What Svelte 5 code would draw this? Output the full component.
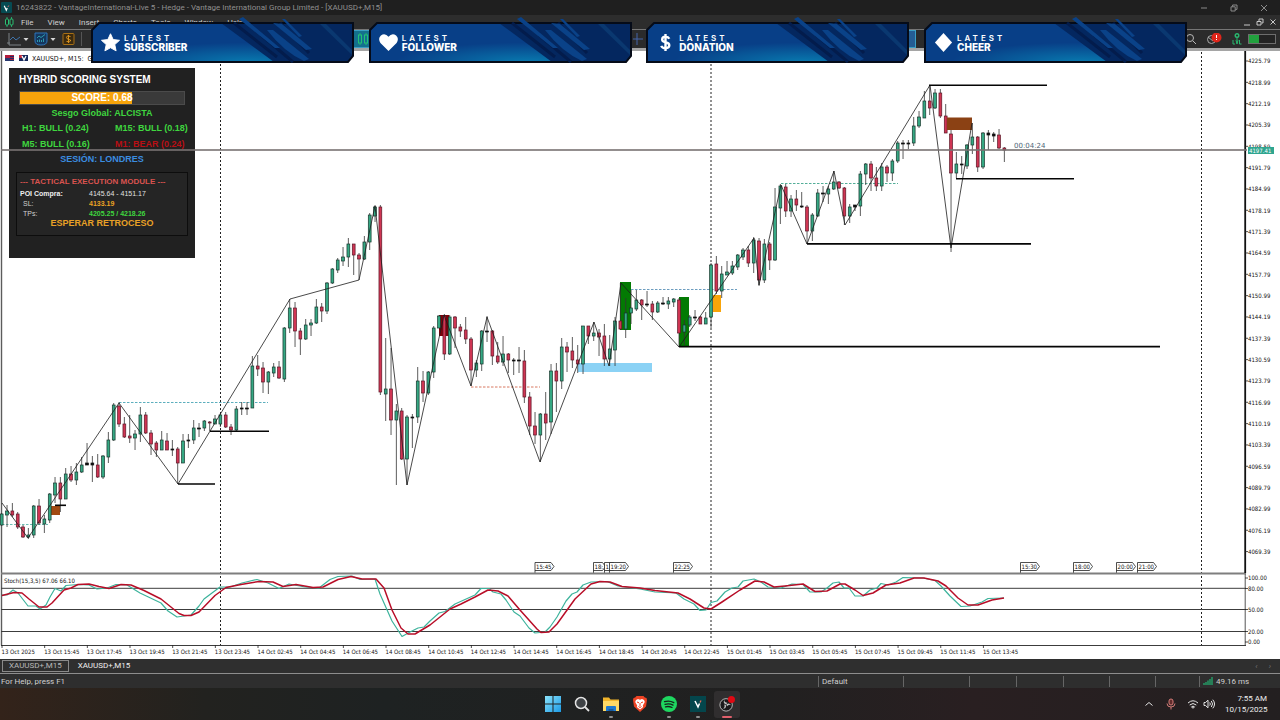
<script>
    // one candle per entry: high, body top, body bottom, low, direction (g, r or n for a doji)
    const raw = `513 514 525 526 g|505 511 515 527 g|503 511 515 517 r|512 514 527 529 r|525 527 537 538 r|528 535 537 539 g|505 506 535 538 g|499 506 523 525 r|515 519 524 533 g|493 494 520 523 g
477 483 495 503 g|477 483 499 512 r|468 474 499 499 g|466 474 480 482 r|463 472 480 485 g|457 465 472 473 g|443 463 465 465 n|456 463 465 482 n|454 465 477 478 r|455 456 477 479 g
432 440 457 463 g|403 405 440 441 g|402 406 424 427 r|417 424 437 438 r|415 436 438 443 r|430 434 438 450 g|407 415 434 442 g|412 415 433 434 r|430 433 444 455 r|441 443 450 457 r
431 440 450 450 g|433 441 450 450 r|440 449 450 456 n|447 449 463 484 r|434 441 463 463 g|434 440 441 448 n|420 428 440 444 g|423 428 429 437 n|420 421 428 431 g|421 422 423 431 r
415 419 424 424 g|413 415 424 427 g|412 415 427 428 r|424 427 430 435 r|406 409 430 431 g|402 408 409 415 n|402 408 409 415 n|356 366 408 408 g|355 366 369 376 r|362 368 382 393 r
371 372 382 394 g|363 367 373 377 g|361 367 378 379 r|327 328 379 382 g|299 308 328 333 g|302 308 331 347 r|328 331 339 355 r|319 325 339 340 g|319 323 325 336 g|299 307 323 324 g
303 307 311 322 r|282 283 311 314 g|268 269 283 284 g|258 260 270 273 g|247 257 261 266 g|238 244 257 267 g|244 244 255 275 r|253 255 259 280 r|236 242 259 260 g|213 215 242 250 g
205 207 216 222 g|205 207 392 395 r|338 389 394 421 g|348 389 420 435 r|404 411 420 485 g|408 411 459 460 r|415 417 459 485 g|414 417 418 448 n|367 381 417 423 g|371 381 393 402 r
371 372 393 395 g|326 328 372 378 g|315 316 328 328 g|314 316 354 360 r|315 317 354 355 g|316 317 328 348 r|324 327 331 337 r|317 330 339 344 r|337 339 370 386 r|360 363 370 377 g
330 331 364 371 g|316 331 332 342 n|330 331 356 365 r|342 356 362 364 r|336 354 362 366 g|353 354 360 373 r|358 360 361 375 n|347 360 361 373 n|350 361 397 403 r|392 397 426 435 r
412 426 435 444 r|413 414 435 462 g|392 414 423 440 r|364 371 422 434 g|363 371 381 412 r|338 347 381 389 g|342 347 352 372 r|337 351 360 368 r|345 360 364 373 r|326 326 364 374 g
326 326 336 344 r|322 333 336 341 g|329 333 337 356 r|324 336 359 366 r|335 349 359 366 g|317 321 350 366 g|283 321 329 330 r|298 313 329 338 g|290 308 313 324 g|290 300 309 311 g
299 300 305 320 r|291 304 305 307 n|301 304 312 320 r|301 303 312 313 g|297 303 304 305 n|297 301 304 309 g|298 299 302 307 g|298 300 333 347 r|320 325 332 345 g|315 317 325 327 g
310 317 318 321 n|316 317 324 324 r|312 318 324 324 g|263 265 317 328 g|256 264 291 294 r|266 274 291 298 g|261 272 275 275 g|261 266 273 275 g|254 255 267 270 g|248 250 257 260 g
246 250 263 267 r|237 240 263 273 g|238 241 280 286 r|239 244 280 283 g|242 244 260 270 r|188 207 260 261 g|184 186 208 224 g|184 187 211 217 r|195 199 211 217 g|190 199 205 211 r
192 206 207 208 n|205 207 231 244 r|213 215 231 241 g|189 193 216 217 g|186 193 194 202 n|186 189 194 204 g|171 182 189 190 g|181 182 188 189 r|187 188 216 225 r|204 207 216 223 g
205 205 207 211 n|171 174 206 216 g|163 164 174 185 g|161 164 178 191 r|167 178 186 191 r|163 167 186 191 g|165 167 173 182 r|159 161 173 181 g|141 143 161 163 g|140 143 144 159 n
140 143 144 149 n|117 126 143 146 g|111 117 126 128 g|91 101 118 118 g|86 101 108 115 r|89 93 108 109 g|89 93 116 118 r|104 116 133 133 r|130 134 173 252 r|152 164 173 178 g
156 164 165 174 n|144 145 166 169 g|123 137 145 154 g|136 137 167 172 r|132 133 167 169 g|130 133 135 150 n|132 134 136 142 n|129 135 148 149 r|147 148 150 162 r`;

    const step = 16 / 3;
    const candles = raw.split(/[|\n]/).map((row, i) => {
        const [high, top, bottom, low, dir] = row.trim().split(' ');
        return { x: 1.7 + i * step, high: +high, top: +top, bottom: +bottom, low: +low, dir };
    });

    const zigzag = '2,503 28,538 119,403 178,484 290,299 359,280 375,206 407,485 444,315 471,386 487,317 540,462 594,322 609,366 621,283 679,347 754,238 759,285 781,185 807,244 834,171 845,225 930,85 951,248 972,123';

    const levels = [
        [929, 1047, 85.2], [956, 1074, 178.7], [807, 1031, 243.9], [679, 1160, 346.6],
        [210, 269, 431.3], [178, 215, 484], [55, 66, 505.3]
    ];

    const dashes = [
        [119, 268, 402.5, '#4aa5b5'], [2, 48, 524.5, '#5ab8aa'], [471, 540, 387, '#d4694f'],
        [631, 737, 289.5, '#5b92b8'], [781, 898, 183.5, '#3fa58c']
    ];

    const zones = [
        [51, 506, 9, 9, '#a14a12'], [439, 315, 10, 21, '#7d0008'], [578, 363, 74, 9, '#8bd2f5'],
        [620, 282, 11, 48, '#037a03'], [679, 297, 10, 49, '#037a03'], [713, 295, 8, 17, '#f9a50a']
    ];

    const prices = Array.from({ length: 24 }, (_, i) => ({
        y: 61 + i * 21.33,
        label: (4225.79 - i * 6.8).toFixed(2)
    }));

    const dates = [
        '13 Oct 2025', '13 Oct 15:45', '13 Oct 17:45', '13 Oct 19:45', '13 Oct 21:45', '13 Oct 23:45',
        '14 Oct 02:45', '14 Oct 04:45', '14 Oct 06:45', '14 Oct 08:45', '14 Oct 10:45', '14 Oct 12:45',
        '14 Oct 14:45', '14 Oct 16:45', '14 Oct 18:45', '14 Oct 20:45', '14 Oct 22:45', '15 Oct 01:45',
        '15 Oct 03:45', '15 Oct 05:45', '15 Oct 07:45', '15 Oct 09:45', '15 Oct 11:45', '15 Oct 13:45'
    ];

    const events = [
        [535, '15:45'], [593.5, '18:'], [604.5, '1'], [609.5, '19:20'], [673.5, '22:25'],
        [1020.5, '15:30'], [1073.5, '18:00'], [1116.5, '20:00'], [1137.5, '21:00']
    ];

    const stochLevels = [
        [578, '100.00'], [588.5, '80.00'], [609.5, '50.00'], [631.5, '20.00'], [642, '0.00']
    ];

    const stochMain = '2,595 7,595 13,590 18,593 28,606 36,606 40,609 46,605 50,597 55,588.5 61,591 66,585.5 78,584.5 89,585 97,589 107,588 116,584.5 127,585 140,593 161,603 168,611 177,617 191,615 199,606 204,599 220,587 230,587 242,583 257,579.5 268,583 279,588.5 289,584 305,587 319,588 330,579.5 338,576.5 352,576 360,579.5 375,579 380,594 392,621 402,636.5 410,632 418,628 424,627 430,621 439,613 445,611.5 455,604 475,595 481,588.5 489,588.5 493,592 501,594 506,600 514,612 520,616 529,628 535,633 545,632 550,627 557,617 566,601 572,594 577,592 583,585 591,582 607,581.5 618,586 640,589 655,592 676,593 684,599 694,604 700,610.5 706,610 711,602.5 717,601 725,592 732,588 738,587 743,581 754,579 761,582 768,587 781,588 792,584 803,584.5 810,592 821,592 827,588 833,583 839,582 844,588 849,588 855,596 863,596 870,590 877,588 881,583.5 888,585 896,582 903,577.5 923,578 935,580.5 941,586 950,596 961,606.5 970,606 982,602 988,598.5 1004,598';
    const stochSignal = '2,595.5 14,592.5 22,593 29,599 39,607 47,607 52,603 64,590 71,588 78,584.5 89,584 99,586.5 109,588.5 121,584.5 131,585 144,590.5 161,599 179,613.5 184,615.5 191,615.5 199,612 215,595.5 226,587.5 241,584.5 259,581.5 273,582 283,586.5 296,584.5 313,587.5 323,587 338,579.5 351,576.5 362,579 376,579 384,588 392,610 401,628 408,634 415,634 430,625 450,609 461,604 475,597 488,590 498,591 508,596 520,610 537,629 541,632.5 549,632 557,624 575,599 591,584 600,581.5 610,582 622,586.5 640,588 655,590.5 678,593 690,599 704,608 711,609 722,602 740,590 755,581 764,582 774,587 785,586 803,584 815,591.5 827,591 840,584 845,584 855,590 863,595.5 873,593 886,585 900,583 914,578 924,578 938,581 946,586 958,598 968,605 978,605 992,600 1004,598';

    const menus = ['File', 'View', 'Insert', 'Charts', 'Tools', 'Window', 'Help'];

    const banners = [
        { icon: 'star', name: 'SUBSCRIBER' },
        { icon: 'heart', name: 'FOLLOWER' },
        { icon: 'dollar', name: 'DONATION' },
        { icon: 'diamond', name: 'CHEER' }
    ];

    const frames = [
        { name: 'H1', text: 'BULL (0.24)', bear: false },
        { name: 'M15', text: 'BULL (0.18)', bear: false },
        { name: 'M5', text: 'BULL (0.16)', bear: false },
        { name: 'M1', text: 'BEAR (0.24)', bear: true }
    ];

    let score = 0.68;
    let activeTab = 1;
    const tabs = ['XAUUSD+,M15', 'XAUUSD+,M15'];
</script>

<div class="screen">
    <header class="titlebar">
        <svg class="app-icon" viewBox="0 0 12 12"><rect width="12" height="12" rx="1" fill="#064b52" /><path d="M3.5 4l2.3 5 1-2.5" stroke="#fff" fill="none" stroke-width="1.3" /><path d="M7.5 5.5l1-1.7" stroke="#e66" stroke-width="1" /></svg>
        <h1>16243822 - VantageInternational-Live 5 - Hedge - Vantage International Group Limited - [XAUUSD+,M15]</h1>
        <div class="window-buttons">
            <button aria-label="Minimize"><svg viewBox="0 0 8 8"><path d="M1 4h6" /></svg></button>
            <button aria-label="Restore"><svg viewBox="0 0 8 8"><path d="M1 2.8h4.2V7H1zM2.6 2.6V1H7v4.4H5.4" /></svg></button>
            <button aria-label="Close"><svg viewBox="0 0 8 8"><path d="M1 1l6 6M7 1l-6 6" /></svg></button>
        </div>
    </header>

    <nav class="menubar">
        <svg class="menu-icon" viewBox="0 0 10 10"><path d="M3 0v10M7.500 0v10" stroke="#25a666" /><rect x="1.500" y="2" width="3" height="6" rx="1" fill="#242424" stroke="#2bc275" /><rect x="6" y="2" width="3" height="6" rx="1" fill="#242424" stroke="#2bc275" /></svg>
        {#each menus as menu}
        <button>{menu}</button>
        {/each}
        <div class="child-buttons">
            <button aria-label="Minimize chart"><svg viewBox="0 0 8 8"><path d="M1 7h6" /></svg></button>
            <button aria-label="Restore chart"><svg viewBox="0 0 8 8"><path d="M1 3.500h4V7H1zM3 3V1h4v4H5.500" /></svg></button>
            <button aria-label="Close chart"><svg viewBox="0 0 8 8"><path d="M1.500 1.500l5 5M6.500 1.500l-5 5" /></svg></button>
        </div>
    </nav>

    <div class="toolbar">
        <div class="tools">
            <button aria-label="Line chart"><svg class="wide" viewBox="0 0 22 14"><path d="M2 1v12h12M0 11h3" stroke="#7d8286" fill="none" /><path d="M3 8l3-3 3 3 4-3" stroke="#3f72a8" fill="none" /><path d="M16.500 6h5l-2.500 3z" fill="#d5d5d5" /></svg></button>
            <button aria-label="Indicators"><svg class="wide" viewBox="0 0 22 14"><path d="M1 1h12v8q0 4-6 4T1 9z" fill="#14375f" stroke="#2d76bd" /><path d="M3 6l2-2 2 1.500 4-3M3.500 10V8M5.500 10V7.500M7.500 10V8M9.500 10V6.500" stroke="#35b5c0" fill="none" stroke-width="0.8" /><path d="M16.500 6h5l-2.500 3z" fill="#d5d5d5" /></svg></button>
            <button aria-label="Trade"><svg viewBox="0 0 14 14"><rect x="2" y="1.500" width="11" height="11" rx="1" fill="#3a2a10" stroke="#a86f14" /><path d="M9.500 4.500q-4-1.500-4 .8T9.500 8q.5 2.500-4 1.400M7.500 3v8" stroke="#d9911d" fill="none" /></svg></button>
        </div>
        <div class="tool-status">
            <svg viewBox="0 0 12 12"><circle cx="5" cy="5" r="3.500" stroke="#b9b9b9" fill="none" /><path d="M8 8l3 3" stroke="#b9b9b9" /></svg>
            <svg class="alert" viewBox="0 0 16 12"><circle cx="5.500" cy="6.500" r="4" stroke="#a9a9a9" fill="none" /><path d="M2 4l5 4 2-2" stroke="#a9a9a9" fill="none" /><circle cx="10.500" cy="4.500" r="5" fill="#e0261b" /><path d="M10.500 2v3M10.500 6v1" stroke="#fff" /></svg>
            <svg viewBox="0 0 12 12"><circle cx="6" cy="2.500" r="1.800" fill="none" stroke="#29b86f" stroke-width="1.400" /><path d="M6 4v3M2 7v4h2M5 7l1 4 1-4M8.500 7v4h2" stroke="#29b86f" fill="none" /></svg>
            <div class="battery"><div class="charge"></div></div>
        </div>
        <div class="active-tool first"><svg viewBox="0 0 12 14"><path d="M3 1v12M9 1v12" stroke="#22b56c" /><rect x="1.500" y="3" width="3" height="8" fill="#14708e" stroke="#22c277" /><rect x="7.500" y="3" width="3" height="8" fill="#14708e" stroke="#22c277" /></svg></div>
        <div class="plain-tool"><svg viewBox="0 0 12 14"><path d="M4 1v12M0 7h10" stroke="#4565a8" /></svg></div>
        <div class="active-tool last"></div>
    </div>

    <main class="chart">
        <svg class="plot" viewBox="0 51 1280 608" role="img" aria-label="XAUUSD+ M15 chart">
            <rect y="51" width="1280" height="608" fill="#fff" />
            <path d="M1.500 51V645.500" stroke="#5c5c5c" stroke-width="1.400" />

            <g shape-rendering="crispEdges">
                <rect x="5" y="55" width="9" height="6" fill="#b01c3c" /><path d="M10 56h4M10 58h4M10 60h4" stroke="#1d3269" /><rect x="5" y="58" width="5" height="3" fill="#28386e" />
                <rect x="19" y="55" width="9" height="6" fill="#17295b" /><rect x="19" y="55" width="3" height="3" fill="#c22a3e" />
            </g>
            <path d="M22 56l2 4 2-4" stroke="#fff" fill="none" stroke-width="1.300" />
            <text x="32" y="61" class="symbol">XAUUSD+, M15:&#160; Gold vs US Dollar</text>

            {#each [220.5, 711, 1201.5] as x}
            <path d="M{x} 52V645" class="day" />
            {/each}

            {#each dashes as [x1, x2, y, color]}
            <path d="M{x1} {y}H{x2}" stroke={color} stroke-dasharray="2.5 1.500" stroke-width="0.9" />
            {/each}

            {#each zones as [x, y, w, h, color]}
            <rect {x} {y} width={w} height={h} fill={color} />
            {/each}

            {#each candles as c}
            <path d="M{c.x} {c.high}V{c.low}" class="wick" />
            <rect x={c.x - 1.4} y={c.top} width="2.8" height={Math.max(c.bottom - c.top, 1)} class="candle {c.dir}" />
            {/each}

            <rect x="947" y="117.500" width="25" height="12.500" fill="#8b4114" />
            <polyline points={zigzag} class="zigzag" />

            {#each levels as [x1, x2, y]}
            <path d="M{x1} {y}H{x2}" class="level" />
            {/each}

            <text x="1014" y="148" class="countdown">00:04:24</text>

            {#each events as [x, label]}
            <path d="M{x} 573V562.500h{label.length > 3 ? 16 : 9}l3 4-3 4H{x}" class="flag" />
            <text x={x + 1} y="569" class="tick-text">{label}</text>
            {/each}

            <path d="M1 573.500H1246" stroke="#7e7e7e" stroke-width="2" />
            <path d="M1245.200 51V573" stroke="#111" stroke-width="1.800" />
            <path d="M1245.200 574V645.500" stroke="#555" />
            {#each prices as p}
            <path d="M1245 {p.y}h3" class="tick" />
            <text x="1248" y={p.y + 2.3} class="tick-text">{p.label}</text>
            {/each}

            {#each [588.3, 609.5, 631.5, 645.5] as y}
            <path d="M1 {y}H1246" stroke="#3c3c3c" />
            {/each}
            {#each stochLevels as [y, label]}
            <path d="M1245 {y}h3" class="tick" />
            <text x="1248" y={y + 2.3} class="tick-text">{label}</text>
            {/each}
            <polyline points={stochMain} class="stoch main" />
            <polyline points={stochSignal} class="stoch signal" />
            <text x="4" y="582.500" class="tick-text">Stoch(15,3,5) 67.06 66.10</text>

            {#each dates as date, i}
            <path d="M{2 + i * 42.67} 645v3" class="tick" />
            <text x={1.5 + i * 42.67} y="654" class="tick-text">{date}</text>
            {/each}
        </svg>

        <section class="panel">
            <h2>HYBRID SCORING SYSTEM</h2>
            <div class="score">
                <div class="fill" style="width: {score * 100}%"></div>
                <span>SCORE: {score}</span>
            </div>
            <p class="bias">Sesgo Global: ALCISTA</p>
            <div class="frames">
                {#each frames as f}
                <span class={f.bear ? 'bear' : ''}>{f.name}: {f.text}</span>
                {/each}
            </div>
            <p class="session">SESIÓN: LONDRES</p>
            <div class="module">
                <h3>--- TACTICAL EXECUTION MODULE ---</h3>
                <dl>
                    <dt class="poi">POI Compra:</dt><dd>4145.64 - 4151.17</dd>
                    <dt>SL:</dt><dd class="sl">4133.19</dd>
                    <dt>TPs:</dt><dd class="tp">4205.25 / 4218.26</dd>
                </dl>
                <p class="wait">ESPERAR RETROCESO</p>
            </div>
        </section>
        <div class="price-line"><span>4197.41</span></div>
    </main>

    <nav class="tabs">
        {#each tabs as tab, i}
        <button class={activeTab === i ? 'open' : ''} on:click={() => (activeTab = i)}>{tab}</button>
        {/each}
        <span class="arrows"><i>‹</i><i>›</i></span>
    </nav>

    <footer class="status">
        <span>For Help, press F1</span>
        <span>Default</span>
        <span></span>
        <span></span>
        <span></span>
        <span></span>
        <span></span>
        <span></span>
        <span class="ping"><svg viewBox="0 0 10 8"><path d="M1 8V6M3 8V5M5 8V3.500M7 8V2M9 8V0" stroke="#22b573" stroke-width="1.200" /></svg>49.16 ms</span>
    </footer>

    <div class="taskbar">
        <div class="apps">
            <button aria-label="Start"><svg viewBox="0 0 16 16"><defs><linearGradient id="win" x2="1" y2="1"><stop stop-color="#8be3fb" /><stop offset="1" stop-color="#1c9be6" /></linearGradient></defs><path d="M0 0h7.500v7.500H0zM8.500 0H16v7.500H8.500zM0 8.500h7.500V16H0zM8.500 8.500H16V16H8.500z" fill="url(#win)" /></svg></button>
            <button aria-label="Search"><svg viewBox="0 0 16 16"><circle cx="7" cy="7" r="5.500" fill="#3f4346" stroke="#e4e4e4" stroke-width="1.500" /><path d="M11 11l4 4" stroke="#e4e4e4" stroke-width="1.800" /></svg></button>
            <button class="running" aria-label="File Explorer"><svg viewBox="0 0 16 16"><path d="M0 1.500h6l1.500 2H16V15H0z" fill="#f2b52b" /><path d="M0 5h16v10H0z" fill="#ffd966" /><path d="M3 15v-4q0-1 1-1h8q1 0 1 1v4z" fill="#1f78cf" /><path d="M5.500 15v-2h5v2z" fill="#155a9f" /></svg></button>
            <button aria-label="Brave"><svg viewBox="0 0 16 16"><path d="M4.500 0h7l1.300 1.500 1.700.5.5 2-1 6.500L8 16l-6-5.500L1 4l.5-2 1.700-.5z" fill="#ee4324" /><path d="M4 4l2-1 2 .7L10 3l2 1 .8 2-2 3.500.4 1.500L8 13.500 4.800 11l.4-1.500-2-3.500z" fill="#fff" /><path d="M5 6l2 .8M11 6l-2 .8M8 7v3M6.500 10.500L8 11.500l1.500-1" stroke="#ee4324" fill="none" /></svg></button>
            <button class="running" aria-label="Spotify"><svg viewBox="0 0 16 16"><circle cx="8" cy="8" r="8" fill="#1ed760" /><path d="M3.500 5.700q5-1.500 9.300.9M4 8.300q4.500-1.200 8 .8M4.500 10.800q3.500-.9 6.500.7" stroke="#16251b" stroke-width="1.300" fill="none" stroke-linecap="round" /></svg></button>
            <button class="running" aria-label="Vantage"><svg viewBox="0 0 16 16"><path d="M0 0h16v16H0z" fill="#04464c" /><path d="M5 5l3 6 1.500-3.500" stroke="#fff" stroke-width="1.500" fill="none" /><path d="M10 6.500L11 4.500" stroke="#e86a58" stroke-width="1.300" /></svg></button>
            <button class="current" aria-label="OBS Studio"><svg viewBox="0 0 18 18"><circle cx="8" cy="10" r="7" fill="#1b191b" stroke="#c8c8c8" /><g fill="#bdbdbd"><path d="M8 9.500Q4 8 6 4.500q0 3 3.500 3.200z" /><path d="M8.300 9.500q3.300-2.700 5.200.8-2.500-1.500-4.500 1.300z" /><path d="M7.800 10q.7 4.300-3.300 4.200 2.700-1.400 1.300-4.500z" /></g><circle cx="14" cy="4" r="4" fill="#e00913" /></svg></button>
        </div>
        <div class="tray">
            <svg viewBox="0 0 12 12"><path d="M2.500 7.500L6 4.500l3.500 3" /></svg>
            <svg class="mic" viewBox="0 0 12 12"><rect x="4" y="1" width="4" height="6" rx="2" fill="#622c2c" /><path d="M2 5.500q0 3.500 4 3.500t4-3.500M6 9v2.500" /></svg>
            <div class="net">
                <svg viewBox="0 0 12 12"><path d="M1 5q5-4.500 10 0M2.700 7q3.300-3 6.600 0M4.500 8.800Q6 7.500 7.500 8.800L6 10.300z" /></svg>
                <svg viewBox="0 0 12 12"><path d="M1 4.500v3h1.500L5 9.800V2.200L2.500 4.500zM6.700 4.500q1.300 1.500 0 3M8.300 3q2.500 3 0 6M9.800 1.700q3.500 4.300 0 8.600" /></svg>
            </div>
            <div class="clock"><time>7:55 AM</time><span>10/15/2025</span></div>
        </div>
    </div>

    <aside class="banners">
        {#each banners as b}
        <div class="banner">
            <svg class="art" viewBox="0 0 263 46" preserveAspectRatio="none" aria-hidden="true">
                <defs>
                    <radialGradient id="glow" cx="0.6" cy="1" r="0.5"><stop stop-color="#0879af" /><stop offset="1" stop-color="#083f87" /></radialGradient>
                </defs>
                <path d="M8 6H262V39L257 45H1V13z" fill="url(#glow)" />
                <path d="M130 6H262V39L257 45H183z" fill="#04275f" />
                <path d="M228 6h6l27 27v5z" fill="#0a3870" />
                <path d="M8 6H262V39L257 45H1V13z" fill="none" stroke="#050b18" stroke-width="2" />
                <path d="M143 6l43 34M170 18l32 27M189 6l29 30" stroke="#031c4c" stroke-width="3" fill="none" />
                <g fill="#0a4288">
                    <path d="M148 2l4-2 37 31-5 0z" /><path d="M176 13l6 0 36 29-5 2q-20-9-37-31z" /><path d="M182 6l9 1 30 25-6 1z" /><path d="M191 2l3 0 17 17-3 1z" />
                </g>
            </svg>
            <svg class="mark" viewBox="0 0 20 20" aria-hidden="true">
                {#if b.icon === 'star'}
                <path d="M10 .8l2.800 6.100 6.700.8-5 4.500 1.400 6.600L10 15.500l-5.900 3.300 1.400-6.600-5-4.500 6.700-.8z" stroke="#fff" stroke-linejoin="round" />
                {:else if b.icon === 'heart'}
                <path d="M10 19L1.500 10.500Q-1.500 5.500 2 2.500q4.500-3 8 1.500 3.500-4.500 8-1.500 3.500 3 .5 8z" />
                {:else if b.icon === 'dollar'}
                <path d="M14 6Q13 4 10 4 6.500 4 6.500 6.800 6.500 9 10 9.700q4 .8 4 3.300 0 3-4 3-3.500 0-4.500-2.500M10 1v18" fill="none" stroke="#fff" stroke-width="2.500" />
                {:else}
                <path d="M10 0l9 10-9 10L1 10z" />
                {/if}
            </svg>
            <p><small>LATEST</small><strong>{b.name}</strong></p>
        </div>
        {/each}
    </aside>
</div>

<style>
    :global(body) {
        background: #202020;
    }
    .screen {
        position: relative;
        font-family: Roboto, "Noto Sans", sans-serif;
        font-size: 8px;
        color: #d0d0d0;
        overflow: hidden;
    }
    button {
        padding: 0;
        border: 0;
        background: none;
        color: inherit;
        font: inherit;
    }
    svg {
        display: block;
    }
    h1, h2, h3, p, dl, dd {
        margin: 0;
    }
    .titlebar {
        display: flex;
        align-items: center;
        gap: 4px;
        height: 15px;
        padding-left: 1px;
        background: #1f1f1f;
    }
    .app-icon {
        width: 11px;
        height: 11px;
    }
    h1 {
        font-size: 8px;
        font-weight: 400;
        color: #8f8f8f;
        white-space: nowrap;
    }
    .window-buttons, .child-buttons {
        display: flex;
        margin-left: auto;
    }
    .window-buttons {
        gap: 22px;
        padding-right: 12px;
    }
    .window-buttons svg, .child-buttons svg {
        width: 8px;
        height: 8px;
        fill: none;
        stroke: #8a8a8a;
    }
    .menubar {
        display: flex;
        align-items: center;
        gap: 14px;
        height: 14px;
        padding: 0 3px 0 4px;
        background: #2d2d2d;
    }
    .menu-icon {
        width: 10px;
        height: 10px;
        margin-right: -7px;
    }
    .child-buttons {
        gap: 5px;
    }
    .child-buttons svg {
        stroke: #c8c8c8;
    }
    .toolbar {
        position: relative;
        display: flex;
        align-items: center;
        justify-content: space-between;
        height: 18px;
        padding: 0 4px 0 7px;
        border-top: 1px solid #767676;
        border-bottom: 3px solid #a5a5a5;
        background: #2b2b2b;
    }
    .tools {
        display: flex;
        gap: 5px;
        padding-right: 6px;
        border-right: 1px solid #555;
    }
    .tools svg {
        width: 14px;
        height: 14px;
    }
    .tools .wide {
        width: 22px;
    }
    .tool-status {
        display: flex;
        align-items: center;
        gap: 9px;
    }
    .tool-status svg {
        width: 12px;
        height: 12px;
    }
    .tool-status .alert {
        width: 16px;
    }
    .battery {
        width: 28px;
        height: 10px;
        margin-left: -4px;
        border: 1px solid #6d6d6d;
        box-sizing: border-box;
        background: #232323;
    }
    .charge {
        width: 40%;
        height: 100%;
        background: #22a13e;
    }
    .active-tool, .plain-tool {
        position: absolute;
        top: 0;
        bottom: 0;
        display: flex;
        align-items: center;
    }
    .active-tool {
        background: #14708e;
        border: 1px solid #3b9fc4;
    }
    .active-tool svg, .plain-tool svg {
        width: 12px;
        height: 14px;
    }
    .first {
        left: 350px;
        padding: 0 4px 0 6px;
    }
    .last {
        left: 906px;
        width: 8px;
        background: #245d94;
    }
    .plain-tool {
        left: 633px;
    }
    .chart {
        position: relative;
        background: #fff;
    }
    .plot {
        width: 100%;
        height: auto;
    }
    .tick-text, .symbol {
        font-family: "DejaVu Sans Condensed", "DejaVu Sans", sans-serif;
        font-size: 6px;
        fill: #111;
    }
    .symbol {
        font-size: 7px;
    }
    .countdown {
        font-family: "DejaVu Sans", sans-serif;
        font-size: 7px;
        fill: #4d6577;
    }
    .day {
        stroke: #222;
        stroke-width: 1;
        stroke-dasharray: 2 2;
    }
    .wick {
        stroke: #333;
        stroke-width: 0.8;
    }
    .candle {
        stroke: #16352c;
        stroke-width: 0.7;
        fill: #35a883;
    }
    .candle.r {
        stroke: #5a1626;
        fill: #cf3553;
    }
    .candle.n {
        stroke: #111;
        fill: #111;
    }
    .zigzag {
        fill: none;
        stroke: #1c1c1c;
        stroke-width: 0.8;
    }
    .level {
        stroke: #050505;
        stroke-width: 1.6;
    }
    .flag {
        fill: #fff;
        stroke: #222;
        stroke-width: 0.8;
    }
    .tick {
        stroke: #222;
        stroke-width: 0.8;
    }
    .stoch {
        fill: none;
        stroke-linejoin: round;
    }
    .stoch.main {
        stroke: #3db39c;
        stroke-width: 1.2;
    }
    .stoch.signal {
        stroke: #b80e28;
        stroke-width: 1.5;
    }
    .panel {
        position: absolute;
        top: 17px;
        left: 9px;
        width: 186px;
        height: 190px;
        padding: 6px 7px 0;
        box-sizing: border-box;
        background: #212121;
        font-family: "Liberation Sans", Arial, sans-serif;
        font-size: 9px;
        font-weight: 700;
        line-height: 12px;
        white-space: nowrap;
    }
    h2 {
        padding-left: 3px;
        font-size: 10px;
        line-height: 12px;
        color: #fff;
    }
    .score {
        position: relative;
        height: 14px;
        margin: 5px 3px 0;
        box-sizing: border-box;
        border: 1px solid #4b4b4b;
        background: #3a3a3a;
        color: #fff;
        font-size: 10px;
        text-align: center;
    }
    .fill {
        height: 100%;
        background: #f7a30b;
    }
    .score span {
        position: absolute;
        inset: 0;
    }
    .bias, .frames {
        color: #3fd63f;
    }
    .bias, .session, .wait {
        text-align: center;
    }
    .bias {
        margin-top: 2px;
    }
    .frames {
        display: grid;
        grid-template-columns: 93px auto;
        row-gap: 4px;
        margin-top: 3px;
        padding-left: 6px;
    }
    .bear {
        color: #b90f14;
    }
    .session {
        margin-top: 3px;
        color: #3b8de0;
    }
    .module {
        height: 64px;
        margin-top: 7px;
        padding: 3px 3px 0;
        box-sizing: border-box;
        border: 1px solid #0d0d0d;
        background: #252525;
    }
    h3 {
        font-size: 8px;
        line-height: 12px;
        color: #d9534f;
    }
    dl {
        display: grid;
        grid-template-columns: 69px auto;
        margin-top: 1px;
        font-size: 7px;
        line-height: 10px;
    }
    dt {
        padding-left: 3px;
        font-weight: 400;
    }
    dd {
        font-weight: 400;
        color: #e0e0e0;
    }
    .poi {
        padding-left: 0;
        font-weight: 700;
        color: #eee;
    }
    dd.sl, dd.tp {
        font-weight: 700;
        color: #eba224;
    }
    dd.tp {
        color: #3fd63f;
    }
    .wait {
        line-height: 8px;
        color: #e9a126;
    }
    .price-line {
        position: absolute;
        top: 98px;
        left: 1px;
        right: 6px;
        height: 2px;
        display: flex;
        align-items: center;
        justify-content: flex-end;
        background: linear-gradient(to right, rgba(120, 114, 114, 0.8) calc(100% - 27px), transparent 0);
    }
    .price-line span {
        width: 26px;
        background: #2fa58f;
        color: #fff;
        font-family: "DejaVu Sans Condensed", "DejaVu Sans", sans-serif;
        font-size: 6px;
        line-height: 7px;
        text-indent: 1px;
    }
    .tabs {
        display: flex;
        align-items: center;
        gap: 8px;
        height: 15px;
        padding: 0 9px 0 2px;
        box-sizing: border-box;
        border-bottom: 1px solid #8d8d8d;
        background: #2f2f2f;
    }
    .tabs button {
        padding: 0 6px;
        border: 1px solid #8a8a8a;
        line-height: 10px;
        color: #b9b9b9;
    }
    .tabs .open {
        padding: 0;
        border-color: transparent;
        color: #efefef;
    }
    .arrows {
        display: flex;
        gap: 11px;
        margin-left: auto;
        color: #777;
    }
    .status {
        display: grid;
        grid-template-columns: 818fr 85fr 66fr 47fr 47fr 46fr 46fr 44fr 81fr;
        align-items: center;
        height: 14px;
        background: #2e2e2e;
    }
    .status span {
        height: 11px;
        padding-left: 3px;
        border-left: 1px solid #666;
        line-height: 11px;
    }
    .status span:first-child {
        padding-left: 1px;
        border-left: 0;
    }
    .status .ping {
        display: flex;
        align-items: center;
        gap: 3px;
    }
    .ping svg {
        width: 10px;
        height: 8px;
    }
    .taskbar {
        display: grid;
        grid-template-columns: 1fr auto 1fr;
        align-items: center;
        height: 32px;
        background: linear-gradient(to right, #33231a, #22221f 16%, #1e2222 30%, #212020 60%, #291f21 76%, #231f20);
    }
    .apps {
        grid-column: 2;
        display: flex;
        gap: 3px;
    }
    .apps button {
        position: relative;
        display: grid;
        place-items: center;
        width: 26px;
        height: 27px;
        border-radius: 3px;
    }
    .apps svg {
        width: 16px;
        height: 16px;
    }
    .apps .running::after, .apps .current::after {
        content: "";
        position: absolute;
        bottom: 0;
        width: 4px;
        height: 2px;
        border-radius: 1px;
        background: #8f8f8f;
    }
    .apps .current {
        background: #302e2f;
    }
    .apps .current::after {
        width: 10px;
        background: #e0606c;
    }
    .tray {
        display: flex;
        align-items: center;
        justify-content: flex-end;
        gap: 10px;
        padding-right: 13px;
        color: #eee;
    }
    .tray svg {
        width: 12px;
        height: 12px;
        fill: none;
        stroke: #e6e6e6;
    }
    .tray .mic {
        stroke: #d47c78;
    }
    .net {
        display: flex;
        gap: 4px;
    }
    .clock {
        display: flex;
        flex-direction: column;
        width: 42px;
        line-height: 11px;
        text-align: right;
    }
    .banners {
        position: absolute;
        top: 17px;
        left: 91px;
        right: 93px;
        display: flex;
        justify-content: space-between;
    }
    .banner {
        position: relative;
        display: flex;
        align-items: center;
        gap: 4px;
        width: 263px;
        height: 46px;
        padding: 5px 0 0 10px;
        box-sizing: border-box;
    }
    .art {
        position: absolute;
        inset: 0;
        width: 100%;
        height: 100%;
    }
    .mark {
        position: relative;
        width: 19px;
        height: 19px;
        fill: #fff;
    }
    .banner p {
        position: relative;
        display: flex;
        flex-direction: column;
        font-family: Inter, "Open Sans", sans-serif;
        line-height: 9px;
        color: #fff;
    }
    .banner small {
        font-size: 8px;
        font-weight: 600;
        letter-spacing: 3px;
    }
    .banner strong {
        font-size: 10px;
        font-weight: 800;
    }
</style>
